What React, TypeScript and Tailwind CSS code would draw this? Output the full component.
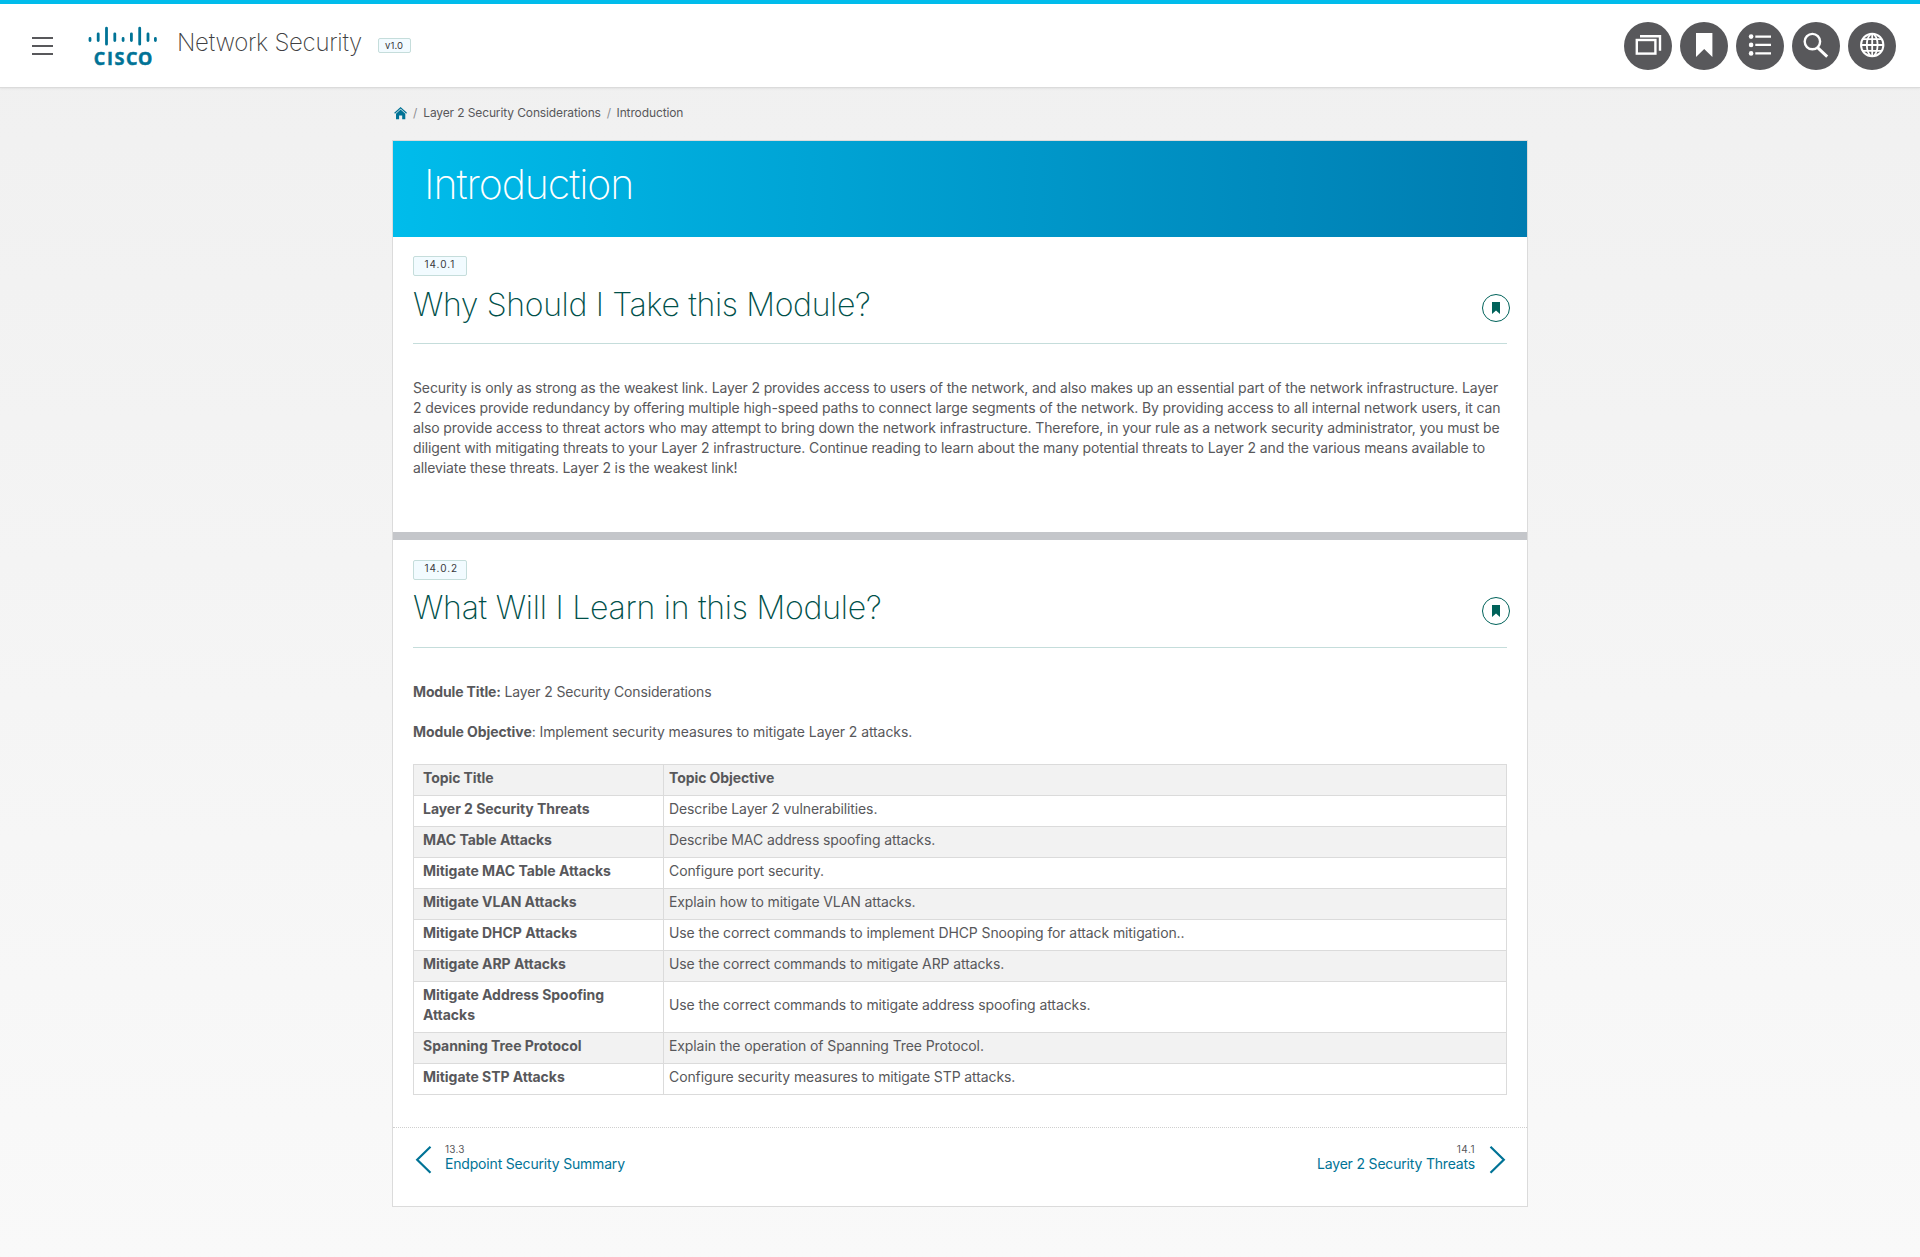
import React from "react";

const topics: { title: string; objective: string }[] = [
  { title: "Layer 2 Security Threats", objective: "Describe Layer 2 vulnerabilities." },
  { title: "MAC Table Attacks", objective: "Describe MAC address spoofing attacks." },
  { title: "Mitigate MAC Table Attacks", objective: "Configure port security." },
  { title: "Mitigate VLAN Attacks", objective: "Explain how to mitigate VLAN attacks." },
  {
    title: "Mitigate DHCP Attacks",
    objective: "Use the correct commands to implement DHCP Snooping for attack mitigation..",
  },
  { title: "Mitigate ARP Attacks", objective: "Use the correct commands to mitigate ARP attacks." },
  {
    title: "Mitigate Address Spoofing Attacks",
    objective: "Use the correct commands to mitigate address spoofing attacks.",
  },
  { title: "Spanning Tree Protocol", objective: "Explain the operation of Spanning Tree Protocol." },
  { title: "Mitigate STP Attacks", objective: "Configure security measures to mitigate STP attacks." },
];

function CiscoLogo() {
  return (
    <svg width="72" height="50" viewBox="0 0 72 50" className="block overflow-visible text-[#007396]" role="img" aria-label="Cisco">
      <g stroke="currentColor" strokeWidth="2.8" strokeLinecap="round">
        <path d="M3 14.4v2.2M11.2 9.8v6.8M19.5 4.2v16M27.8 9.8v6.8M36.1 14.4v2.2M44.4 9.8v6.8M52.7 4.2v16M61 9.8v6.8M68.4 14.4v2.2" />
      </g>
      <text
        x="6.8 20.1 27.4 39.1 50.9"
        y="41.1"
        fill="currentColor"
        stroke="currentColor"
        strokeWidth="0.5"
        className="font-['Open_Sans',sans-serif] text-[18px] font-bold"
      >
        CISCO
      </text>
    </svg>
  );
}

function RoundButton({ label, children }: { label: string; children: React.ReactNode }) {
  return (
    <button aria-label={label} className="size-12 rounded-full bg-[#58585b] text-white">
      <svg width="48" height="48" viewBox="0 0 48 48" fill="none" stroke="currentColor" strokeWidth="2.4">
        {children}
      </svg>
    </button>
  );
}

function Header() {
  return (
    <header className="flex h-[88px] items-start border-t-4 border-b border-b-[#dbdbdb] border-t-[#00bceb] bg-white pr-6 pl-8 shadow-[0_1px_2px_rgba(0,0,0,0.06)]">
      <button aria-label="Menu" className="mt-[33px] flex w-[21px] flex-col gap-[6px]">
        <span className="h-[2px] w-full bg-[#58585b]" />
        <span className="h-[2px] w-full bg-[#58585b]" />
        <span className="h-[2px] w-full bg-[#58585b]" />
      </button>
      <div className="mt-5 ml-[34px]">
        <CiscoLogo />
      </div>
      <h1 className="mt-[23px] ml-[18px] text-2xl leading-[32px] font-extralight tracking-[-0.28px] text-[#3f3f42]">
        Network Security
      </h1>
      <span className="mt-[34px] ml-[15.5px] flex h-[15px] w-[33px] items-center justify-center rounded-[2px] border border-[#c5dddb] bg-[#f2fbff] text-[9.5px] leading-[12px] tracking-[0.1px] text-[#39393b]">
        v1.0
      </span>
      <div className="mt-[18px] ml-auto flex gap-2">
        <RoundButton label="Course windows">
          <rect x="12.8" y="18" width="18.6" height="13.6" />
          <path d="M16 14.2h20v14.6" />
        </RoundButton>
        <RoundButton label="Bookmarks">
          <path d="M16 11h16.4v24l-8.2-8-8.2 8z" fill="currentColor" stroke="none" />
        </RoundButton>
        <RoundButton label="Index">
          <path d="M19.3 14.6H35M19.3 22.9H35M19.3 31.4H35" />
          <g fill="currentColor" stroke="none">
            <circle cx="15.1" cy="14.6" r="2.3" />
            <circle cx="15.1" cy="22.9" r="2.3" />
            <circle cx="15.1" cy="31.4" r="2.3" />
          </g>
        </RoundButton>
        <RoundButton label="Search">
          <circle cx="20.4" cy="19.6" r="7.7" />
          <path d="M25.6 25.6l9.6 9" strokeWidth="2.9" />
        </RoundButton>
        <RoundButton label="Language">
          <circle cx="24.2" cy="23" r="11.2" strokeWidth="2" />
          <ellipse cx="24.2" cy="23" rx="5.4" ry="11.2" strokeWidth="1.8" />
          <path d="M24.2 11.8v22.4M13 23h22.4M14.6 17.2h19.2M14.6 28.8h19.2" strokeWidth="1.8" />
        </RoundButton>
      </div>
    </header>
  );
}

function Breadcrumb() {
  return (
    <nav className="flex h-4 text-xs leading-4 tracking-[-0.12px] whitespace-nowrap text-[#58585b]">
      <svg width="14" height="14" viewBox="0 0 14 14" className="mt-[2px] ml-[2px] text-[#007396]">
        <path d="M.6 6.3 6.6.9l6 5.4" fill="none" stroke="currentColor" strokeWidth="1.2" />
        <path d="M2 6.7 6.6 2.6l4.7 4.1v5.6H8.2V8.4H5.1v3.9H2z" fill="currentColor" />
      </svg>
      <span className="ml-[5px] text-[#8e8e91]">/</span>
      <span className="ml-[6px]">Layer 2 Security Considerations</span>
      <span className="ml-[6px] text-[#8e8e91]">/</span>
      <span className="ml-[5.5px]">Introduction</span>
    </nav>
  );
}

function SectionBadge({ children }: { children: React.ReactNode }) {
  return (
    <span className="block h-5 w-[54px] rounded-[2px] border border-[#c5dddb] bg-[#f2fbff] pl-[10.5px] text-[10px] leading-[15px] tracking-[0.95px] text-[#39393b]">
      {children}
    </span>
  );
}

function BookmarkButton() {
  return (
    <button
      aria-label="Bookmark this section"
      className="mt-[10px] mr-[-3px] flex size-7 items-center justify-center rounded-full border border-[#00625a] text-[#00625a]"
    >
      <svg width="8" height="12" viewBox="0 0 8 12" fill="currentColor">
        <path d="M0 0h8v12L4 8.4 0 12z" />
      </svg>
    </button>
  );
}

function TopicTable() {
  const first = "border border-[#dbdbdb] pt-[3px] pr-5 pb-[7px] pl-[9px] text-left font-bold";
  const second = "border border-[#dbdbdb] pt-[3px] pb-[7px] pl-[5px] text-left";
  return (
    <table className="mt-[22px] w-full table-fixed border-collapse">
      <thead>
        <tr className="bg-[#f2f2f2] tracking-[-0.08px]">
          <th className={first + " w-[250px]"}>Topic Title</th>
          <th className={second + " font-bold"}>Topic Objective</th>
        </tr>
      </thead>
      <tbody className="tracking-[-0.1px]">
        {topics.map((t) => (
          <tr key={t.title} className="even:bg-[#f2f2f2]">
            <th className={first + " tracking-[-0.04px]"}>{t.title}</th>
            <td className={second}>{t.objective}</td>
          </tr>
        ))}
      </tbody>
    </table>
  );
}

export default function App() {
  return (
    <div className="h-[1257px] overflow-hidden bg-linear-to-b from-[#f0f0f0] to-[#f9f9f9] font-['Inter',sans-serif] text-sm leading-5 text-[#58585b]">
      <Header />
      <main className="mx-auto w-[1136px] pt-[17px]">
        <Breadcrumb />
        <article className="mt-[19px] h-[1067px] border border-[#dbdbdb] bg-white">
          <div className="h-24 bg-linear-to-r from-[#00bceb] to-[#007cb0] pt-[15px] pl-[31px]">
            <h2 className="text-[41px] leading-[56px] font-extralight tracking-[-1.05px] text-white">Introduction</h2>
          </div>

          <section className="h-[295px] px-5 pt-[19px]">
            <SectionBadge>14.0.1</SectionBadge>
            <div className="mt-2 flex h-[60px] items-start justify-between border-b border-[#c5dddb]">
              <h3 className="mt-px text-[32px] leading-10 font-extralight tracking-[-0.34px] text-[#00504a]">
                Why Should I Take this Module?
              </h3>
              <BookmarkButton />
            </div>
            <p className="mt-[34px] tracking-[-0.12px] whitespace-nowrap">
              <span className="tracking-[-0.125px]">
                Security is only as strong as the weakest link. Layer 2 provides access to users of the network, and
                also makes up an essential part of the network infrastructure. Layer
              </span>
              <br />
              <span className="tracking-[-0.108px]">
                2 devices provide redundancy by offering multiple high-speed paths to connect large segments of the
                network. By providing access to all internal network users, it can
              </span>
              <br />
              also provide access to threat actors who may attempt to bring down the network infrastructure. Therefore,
              in your rule as a network security administrator, you must be
              <br />
              <span className="tracking-[-0.113px]">
                diligent with mitigating threats to your Layer 2 infrastructure. Continue reading to learn about the
                many potential threats to Layer 2 and the various means available to
              </span>
              <br />
              alleviate these threats. Layer 2 is the weakest link!
            </p>
          </section>

          <div className="h-2 bg-[#c4c6ca]" />

          <section className="px-5 pt-5">
            <SectionBadge>14.0.2</SectionBadge>
            <div className="mt-[7px] flex h-[61px] items-start justify-between border-b border-[#c5dddb]">
              <h3 className="mt-px text-[32px] leading-10 font-extralight tracking-[-0.23px] text-[#00504a]">
                What Will I Learn in this Module?
              </h3>
              <BookmarkButton />
            </div>
            <p className="mt-[34px] tracking-[-0.15px]">
              <b className="font-bold">Module Title:</b> Layer 2 Security Considerations
            </p>
            <p className="mt-5 tracking-[-0.085px]">
              <b className="font-bold">Module Objective</b>: Implement security measures to mitigate Layer 2 attacks.
            </p>
            <TopicTable />
          </section>

          <footer className="mt-8 flex items-start justify-between border-t border-dotted border-[#cfcfcf] px-5 pt-[15px] tracking-[-0.18px] text-[#007396]">
            <a className="flex">
              <svg width="18" height="28" viewBox="0 0 18 28" fill="none" stroke="currentColor" strokeWidth="2.2" className="mt-[3px] ml-[1.5px]">
                <path d="M15.5.8 2.2 13.8l13.3 13" />
              </svg>
              <span className="ml-[12.5px]">
                <span className="block text-[10px] leading-3 tracking-[0.2px] text-[#58585b]">13.3</span>
                <span className="block leading-[18px]">Endpoint Security Summary</span>
              </span>
            </a>
            <a className="mr-px flex">
              <span className="mr-[13px] text-right">
                <span className="block text-[10px] leading-3 tracking-[0.5px] text-[#58585b]">14.1</span>
                <span className="block leading-[18px]">Layer 2 Security Threats</span>
              </span>
              <svg width="18" height="28" viewBox="0 0 18 28" fill="none" stroke="currentColor" strokeWidth="2.2" className="mt-[3px]">
                <path d="M2.5.8l13.3 13-13.3 13" />
              </svg>
            </a>
          </footer>
        </article>
      </main>
    </div>
  );
}
